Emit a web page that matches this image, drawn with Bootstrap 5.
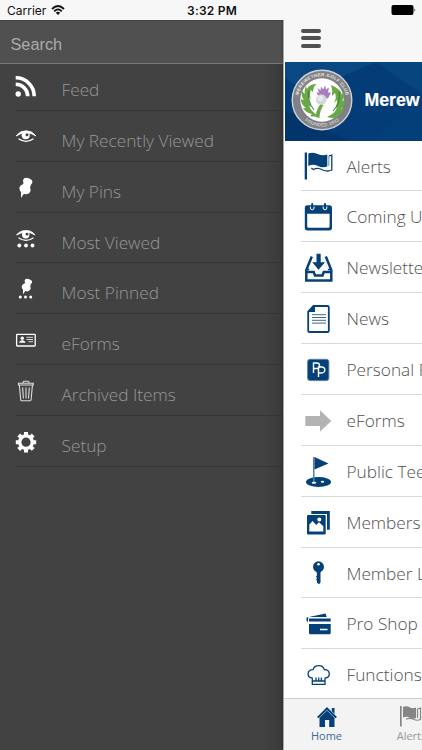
<!DOCTYPE html>
<html lang="en">
<head>
<meta charset="utf-8">
<meta name="viewport" content="width=device-width, initial-scale=1">
<title>Merewether Golf Club</title>
<link href="https://cdn.jsdelivr.net/npm/bootstrap@5.3.0/dist/css/bootstrap.min.css" rel="stylesheet">
<style>
body{width:422px;height:750px;background:#f7f7f7;font-family:"Open Sans",sans-serif}
.status{height:20px;background:#f7f7f7;font:12px/21px Inter,"Liberation Sans",sans-serif;color:#111;letter-spacing:0;z-index:3}
.status .clock{letter-spacing:.2px;padding-left:2px}
.drawer{width:284px;background:linear-gradient(90deg,transparent 262px,rgba(0,0,0,.13) 283px),#424242;border-right:1px solid #d6d6d6}
.search{height:44px;background:#505050;border-top:1px solid #444;border-bottom:1px solid #777;padding:1px 0 0 10.5px;font:16.3px/44px "Liberation Sans",sans-serif;color:#ababab}
.drawer-list{margin-top:-4.1px}
.entry{height:50.88px;font-weight:300;font-size:17.25px;white-space:nowrap}
.drawer .entry{color:#979797;padding-left:14px;padding-top:9px}
.drawer .entry svg{width:24px;height:51px;margin-top:-9px;flex:none;fill:#fff;align-self:flex-start}
.drawer .entry span{margin-left:23.5px}
.drawer .entry,.main .entry{position:relative}
.entry::after{content:"";position:absolute;bottom:0;right:0;height:1px}
.drawer .entry::after{left:16px;background:#353535}
.main{background:#fff;width:138px;margin-top:-20px;box-shadow:-1px 0 3px rgba(0,0,0,.35);z-index:2}
.topbar{height:62px;background:#f7f7f7;padding:29px 0 0 17px}
.topbar i{width:20px;height:3.6px;border-radius:2px;background:#505050;margin-bottom:3.9px}
.club{height:78.5px;background:#033c76;margin-left:1px;color:#fff;font:bold 17.7px/1 "Liberation Sans",sans-serif;-webkit-text-stroke:.2px #fff}
.club>svg{width:137px;height:78.5px;flex:none;-webkit-text-stroke:0}
.club>span{position:absolute;left:79.5px;white-space:nowrap}
.main .entry{color:#505050;padding-left:16px}
.main .entry svg{width:40px;height:51px;flex:none;fill:#064078}
.main .entry span{margin-left:6.5px;padding-top:1px}
.main .entry::after{left:17px;background:#d9d9d9}
.tabs{height:52px;background:#f3f3f3;border-top:1px solid #cfcfcf;left:0;right:0;bottom:0;font-size:11px;line-height:14px}
.tabs>div{width:85px;flex:none;padding-top:6px}
.tabs svg{width:30px;height:24px}
.tab-home{color:#3d6a98}
.tab-alerts{color:#999}
</style>
<script src="https://cdn.jsdelivr.net/npm/bootstrap@5.3.0/dist/js/bootstrap.bundle.min.js"></script>
</head>
<body class="d-flex flex-column overflow-hidden">
<header class="status d-flex justify-content-between align-items-center position-relative flex-shrink-0">
  <div class="d-flex align-items-center ps-2"><span style="margin-left:-1px">Carrier</span>
    <svg class="ms-1" width="16" height="12" viewBox="0 0 16 12" fill="none" stroke="#111" stroke-width="1.8"><path d="M2 5Q8-1 14 5M4.2 7.3Q8 3.5 11.8 7.3"/><path d="M5.8 8.7Q8 7 10.2 8.7L8 11z" fill="#111" stroke="none"/></svg></div>
  <span class="clock fw-semibold position-absolute start-50 translate-middle-x">3:32 PM</span>
  <svg width="32" height="12" viewBox="0 0 32 12"><rect x="1.500" y="1" width="22" height="10" rx="2"/><path d="M24.500 4.300q1.600 1.700 0 3.400z"/></svg>
</header>
<div class="d-flex flex-grow-1">
<aside class="drawer flex-shrink-0">
  <div class="search">Search</div>
  <div class="drawer-list">
    <div class="entry d-flex align-items-center"><svg viewBox="14 0 24 51"><circle cx="18.2" cy="34" r="2.7"/><path d="M15.700 24.200A12 12 0 0 1 27.700 36.300M15.700 17.800A18.300 18.300 0 0 1 34.200 36.300" fill="none" stroke="#fff" stroke-width="3.600"/></svg><span>Feed</span></div>
    <div class="entry d-flex align-items-center"><svg viewBox="14 0 24 51"><path d="M16 25Q20 19.800 26 19.800T36 25Q31 21.800 26 21.800T16 25z" stroke="#fff" stroke-width=".8"/><path d="M18.500 27.800Q26 33 33.500 27.800" fill="none" stroke="#fff" stroke-width="1.300"/><circle cx="25.700" cy="24.300" r="4"/><circle cx="27" cy="23.800" r="1.500" fill="#444"/></svg><span>My Recently Viewed</span></div>
    <div class="entry d-flex align-items-center"><svg viewBox="14 0 24 51"><g id="pin"><ellipse cx="27.700" cy="19.300" rx="4.800" ry="3.200" transform="rotate(20 27.700 19.300)"/><path d="M24 20L31 22L30 26L22 24z"/><ellipse cx="25" cy="27.200" rx="5.800" ry="4.700" transform="rotate(25 25 27.200)"/><path d="M21 30L24.200 31.200L21 36z"/></g></svg><span>My Pins</span></div>
    <div class="entry d-flex align-items-center"><svg viewBox="14 0 24 51"><path d="M16.500 22Q20 17.500 26 17.500T35 22Q31 19.300 26 19.300T16.500 22z" stroke="#fff" stroke-width=".8"/><path d="M18.500 24.700Q26 30 33.500 24.700" fill="none" stroke="#fff" stroke-width="1.200"/><circle cx="25.700" cy="21.700" r="3.700"/><circle cx="27" cy="21.200" r="1.400" fill="#444"/><circle cx="19.300" cy="32.500" r="1.900"/><circle cx="26" cy="32.500" r="1.900"/><circle cx="32.500" cy="32.500" r="1.900"/></svg><span>Most Viewed</span></div>
    <div class="entry d-flex align-items-center"><svg viewBox="14 0 24 51"><use href="#pin" transform="translate(6.200 3.800) scale(.8 .76)"/><circle cx="20.300" cy="34" r="1.500"/><circle cx="25.500" cy="34" r="1.500"/><circle cx="30.700" cy="34" r="1.500"/></svg><span>Most Pinned</span></div>
    <div class="entry d-flex align-items-center"><svg viewBox="14 0 24 51"><rect x="16.600" y="20.400" width="18.600" height="11.600" rx=".7" fill="none" stroke="#fff" stroke-width="1.300"/><circle cx="22.300" cy="24.300" r="1.700"/><path d="M19.300 28.800q0-2.300 3-2.500q3 .2 3 2.500z"/><path d="M26.500 23.300h6.500M26.500 25.500h6.500M28.500 27.700h4.500" stroke="#ddd" stroke-width="1"/></svg><span>eForms</span></div>
    <div class="entry d-flex align-items-center"><svg viewBox="14 0 24 51"><g fill="none" stroke="#ddd" stroke-width="1.100"><path d="M18.500 20v-1.700h14.800V20zM23 18q0-1.700 1-1.700h4q1 0 1 1.700M19.400 20.500l1.300 14.200q.1 1 1 1h8.400q.9 0 1-1l1.300-14.200M22.600 22.500l.8 11M26 22.500v11M29.300 22.500l-.8 11"/></g></svg><span>Archived Items</span></div>
    <div class="entry d-flex align-items-center"><svg viewBox="14 0 24 51"><circle cx="26" cy="26.200" r="6.300" fill="none" stroke="#fff" stroke-width="3.400"/><g id="teeth" stroke="#fff" stroke-width="4"><path d="M26 16v3M26 33.500v3M15.800 26.200h3M33.200 26.200h3"/></g><use href="#teeth" transform="rotate(45 26 26.200)"/></svg><span>Setup</span></div>
  </div>
</aside>
<main class="main position-relative overflow-hidden flex-shrink-0">
  <div class="topbar d-flex flex-column"><i></i><i></i><i></i></div>
  <div class="club d-flex align-items-center position-relative">
    <svg viewBox="285 62 137 78.5"><path d="M285 62h137v78.500H285z" fill="#033c76"/><path d="M285 62h91l-70 30-21-14z" fill="#0a4884"/><path d="M376 62h46v32z" fill="#07457e"/><path d="M285 110l64 30.500h-64z" fill="#02356b"/><path d="M422 94v46.500h-48z" fill="#053f79"/>
      <circle cx="322" cy="100" r="29.800" fill="#808184" stroke="#cdd2d8" stroke-width="1.400"/><circle cx="322" cy="100" r="21.700" fill="#fff"/>
      <path id="arcTop" d="M298 103.500A24.200 24.200 0 1 1 346 103.500" fill="none"/><path id="arcBottom" d="M295.500 106A27.400 27.400 0 0 0 348.500 106" fill="none"/>
      <g fill="#e8e8e8" font-family="Liberation Sans, sans-serif" font-size="4.500" font-weight="700"><text><textPath href="#arcTop" startOffset="50%" text-anchor="middle" textLength="66">MEREWETHER GOLF CLUB</textPath></text><text font-weight="400"><textPath href="#arcBottom" startOffset="50%" text-anchor="middle" textLength="37">FOUNDED 1933</textPath></text></g>
      <g fill="#6aa845"><path d="M317 84q-8 0-10 5l-1-3q-2 5-1 8l-3-3q-1 6 2 9l-3-1q0 6 5 9l-3 0q3 5 9 6l-2 2q4 1 8 0q-7-5-9-10l3 1q-4-5-3-10l2 2q-2-5 0-9l2 2q0-6 4-8"/><path d="M327 117q9-4 10-10l-3 2q4-5 3-9l-3 3q3-6 1-10l-3 3q1-6-1-11q10 4 11 10l1-3q2 5-1 9l3-1q0 6-4 9l3 0q-3 6-8 7l2 1q-5 2-11 0"/><path d="M320.500 104l3 1q-4 6-4 13l-4-1q1-8 5-13"/></g>
      <path d="M309 91q-2 10 5 19M339 92q2 11-6 19" stroke="#367b38" stroke-width="1" fill="none"/>
      <path d="M319 98l-2.500-6 2.500 1-1.500-5 3 2.500.5-4 2 3 2-4 1 4 3-2-1 5 3 0-3 6z" fill="#a77fbe"/><circle cx="321.300" cy="99.500" r="5.300" fill="#d4d7da"/><circle cx="320.300" cy="98.500" r="2.800" fill="#e8eaeb"/></svg>
    <span>Merew</span>
  </div>
  <div>
    <div class="entry d-flex align-items-center"><svg viewBox="300 0 40 51"><path d="M304.700 12.500h2.300v27h-2.300z"/><path d="M308.300 13.500q5-2 10 .7q4.500 2 9 .3V26.500q-4.500 1.800-9.500-.5q-4.500-2.300-9.500 0z"/><path d="M329 15.800l2.800-.7V30q-4 2-9 0q-5-2.800-9.500-.5l-2-1.500" fill="none" stroke="#064078" stroke-width="1.300"/><path d="M328.800 16v10" stroke="#064078" stroke-width=".6"/></svg><span>Alerts</span></div>
    <div class="entry d-flex align-items-center"><svg viewBox="300 0 40 51"><path fill-rule="evenodd" d="M307.500 14.300h21.800q2.700 0 2.700 2.700v19.800q0 2.700-2.700 2.700h-21.800q-2.700 0-2.700-2.700V17q0-2.700 2.700-2.700M307.200 22.800v12.400q0 1.600 1.600 1.600h19.200q1.600 0 1.600-1.600V22.800z"/><path d="M310.400 15.500v1.500a1.800 1.800 0 0 0 3.600 0v-1.500M323.200 15.500v1.500a1.800 1.800 0 0 0 3.600 0v-1.500" fill="none" stroke="#fff" stroke-width="1"/><path d="M312.200 13v3.500M325 13v3.500" stroke="#064078" stroke-width="2" stroke-linecap="round"/></svg><span>Coming U</span></div>
    <div class="entry d-flex align-items-center"><svg viewBox="300 0 40 51"><path d="M316.500 11.700h4.200v8.500h4.300l-6.400 7.500-6.400-7.500h4.300z"/><path d="M311.800 14.500l-5.500 13.500v10.500h25V28l-5.500-13.500M306 30h7.700l1.300 3.500h7.500l1.300-3.500h7.500" fill="none" stroke="#064078" stroke-width="2.500"/><path d="M306.300 27.500h3M328 27.500h3" stroke="#064078" stroke-width="1.500"/></svg><span>Newslette</span></div>
    <div class="entry d-flex align-items-center"><svg viewBox="300 0 40 51"><path d="M313.500 13h14q1.300 0 1.300 1.300v23.400q0 1.300-1.300 1.300h-18q-1.300 0-1.300-1.300V18.500z" fill="none" stroke="#064078" stroke-width="1.800"/><path d="M308 19l7-7v7z"/><path d="M312 21.700h14M312 24.500h14M312 27.300h14M312 30.100h14" stroke="#3d6792" stroke-width="1"/></svg><span>News</span></div>
    <div class="entry d-flex align-items-center"><svg viewBox="300 0 40 51"><rect x="307.600" y="15.300" width="21.300" height="21.300" rx="2.500" stroke="#5f82a5" stroke-width="1"/><path d="M313.500 29V19h3.300a2.500 2.500 0 0 1 0 5.500h-3M318.500 33V23h3.300a2.700 2.700 0 0 1 0 6h-3" fill="none" stroke="#fff" stroke-width="1.400"/></svg><span>Personal P</span></div>
    <div class="entry d-flex align-items-center"><svg viewBox="300 0 40 51"><path d="M305.300 21h14.700v-5.800L331.300 26 320 36.700V31h-14.700z" fill="#b3b3b3"/></svg><span>eForms</span></div>
    <div class="entry d-flex align-items-center"><svg viewBox="300 0 40 51"><ellipse cx="318.500" cy="36" rx="12.500" ry="5"/><path d="M313 11h1.500v26H313z" fill="#5680a6"/><path d="M314.500 11l14 6.600-14 6z"/><ellipse cx="314" cy="36.700" rx="2.300" ry="1" fill="#fff"/><ellipse cx="322.500" cy="35.700" rx="1.700" ry="1" fill="#fff"/></svg><span>Public Tee</span></div>
    <div class="entry d-flex align-items-center"><svg viewBox="300 0 40 51"><path d="M311.300 14h18.500v18.700H327V17h-15.700z"/><rect x="307" y="18" width="18.700" height="19.500" rx="1"/><path d="M309.300 34.500v-7l3.300-3.500 3.600 4 2.800-2.800 4.300 4v5.300z" fill="#fff"/><circle cx="319.300" cy="22.500" r="2" fill="#fff"/></svg><span>Members</span></div>
    <div class="entry d-flex align-items-center"><svg viewBox="300 0 40 51"><circle cx="318.500" cy="19.800" r="5.500"/><path d="M316.500 24h4v11.500l-1.500 1.800-2-1.500v-2l-1-1 1-1.500-1-1.500 1-1.500z"/><circle cx="318.500" cy="17.300" r="1.300" fill="#fff"/></svg><span>Member L</span></div>
    <div class="entry d-flex align-items-center"><svg viewBox="300 0 40 51"><path d="M306.500 19.500L325.500 15.600l1.300 3.300h-18.500l-.4 5-1.400-1zM309 20.500h21.700v3H309zM309 26h21.700v9q0 1.300-1.300 1.300h-19q-1.400 0-1.400-1.300z"/><path d="M320 31.500h7.500" stroke="#fff" stroke-width="1.500"/></svg><span>Pro Shop</span></div>
    <div class="entry d-flex align-items-center"><svg viewBox="300 0 40 51"><path d="M312.300 35.400h12.700v-6.200q4.500-.8 4.300-4.500-.5-4.200-5-4-1-4-5.600-4t-5.600 4q-4.500-.2-5 4-.2 3.700 4.200 4.500zM312.300 32h12.700M316 28.500v3.300M318.700 28.500v3.300M321.300 28.500v3.300" fill="none" stroke="#064078" stroke-width="1.300"/></svg><span>Functions</span></div>
  </div>
  <nav class="tabs position-absolute d-flex text-center">
    <div class="tab-home"><svg viewBox="312 0 30 24" fill="#064078"><path d="M327 2l10 10-1.500 1.300L327 5l-8.500 8.300L317 12z"/><path d="M331.800 3h2.700v6l-2.700-2.700zM327 5.500l7.500 7.200v9.300h-5.300v-7h-4.200V22h-5.500v-9.300z"/></svg><div>Home</div></div>
    <div class="tab-alerts"><svg viewBox="399 0 30 24" fill="#858585"><path d="M402 1h1.700v20.500H402zM405 2q4-1.500 7 .5 3 1.500 6 0V13q-3 1.500-6.500-.5-3-1.700-6.500 0z"/><path d="M419.500 4l3-1v11.500q-3 1.500-6.500 0-4-2-8-.3M419.500 4v9" fill="none" stroke="#858585" stroke-width="1.200"/></svg><div>Alerts</div></div>
  </nav>
</main>
</div>
</body>
</html>
